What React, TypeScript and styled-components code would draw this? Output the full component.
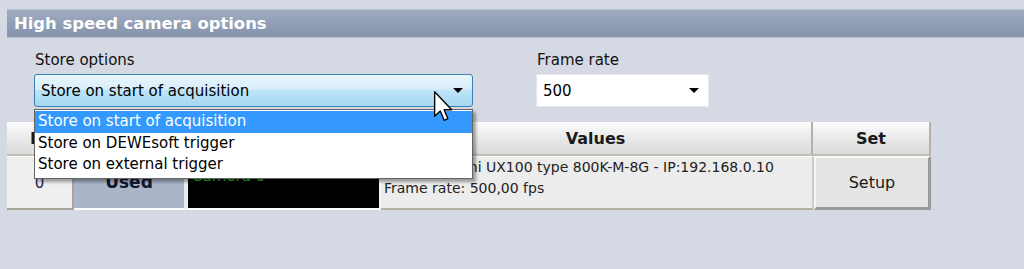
import React from 'react';
import styled, { createGlobalStyle } from 'styled-components';

const GlobalStyle = createGlobalStyle`
  html, body {
    margin: 0;
    padding: 0;
    background: #d5d9e3;
    font-family: "DejaVu Sans", "Liberation Sans", sans-serif;
    color: #000;
  }
`;

const Page = styled.div`
  position: relative;
  width: 1024px;
  height: 269px;
  overflow: hidden;
  padding-top: 9px;
  box-sizing: border-box;
`;

const TitleBar = styled.div`
  margin-left: 7px;
  height: 29px;
  box-sizing: border-box;
  border-top: 1px solid #b4bfcf;
  border-bottom: 1px solid #b7c0ce;
  background: linear-gradient(#9eabc1, #8593ab);
  color: #fff;
  font-weight: bold;
  font-size: 16.4px;
  line-height: 28px;
  padding-left: 7px;
`;

const Options = styled.div`
  display: flex;
  gap: 63px;
  padding: 13px 0 0 34px;
`;

const Field = styled.div<{ $width: number }>`
  position: relative;
  display: flex;
  flex-direction: column;
  gap: 5px;
  width: ${({ $width }) => $width}px;
`;

const Label = styled.div`
  font-size: 15px;
  line-height: 18px;
  padding-left: 1px;
  color: #111;
`;

const Combo = styled.div<{ $active?: boolean }>`
  height: 33px;
  box-sizing: border-box;
  display: flex;
  align-items: center;
  justify-content: space-between;
  padding: 0 9px 0 6px;
  font-size: 15px;
  border-radius: ${({ $active }) => ($active ? '3px' : '1px')};
  border: 1px solid ${({ $active }) => ($active ? '#3c7fb1' : '#e6e8ee')};
  background: ${({ $active }) =>
    $active ? 'linear-gradient(#e9f5fc 0%, #d8eefb 45%, #bde4f8 50%, #a5d7f2 100%)' : '#fff'};
`;

const Arrow = styled.span`
  width: 0;
  height: 0;
  border-left: 5px solid transparent;
  border-right: 5px solid transparent;
  border-top: 5px solid #000;
`;

const DropList = styled.div`
  position: absolute;
  top: 58px;
  left: 0;
  width: 439px;
  box-sizing: border-box;
  background: #fff;
  border: 1px solid #646464;
  box-shadow: 3px 3px 3px rgba(0, 0, 0, 0.35);
  padding: 1px 0 2px;
  z-index: 5;
`;

const DropItem = styled.div<{ $selected?: boolean }>`
  height: 21.5px;
  line-height: 21px;
  padding-left: 3px;
  font-size: 15px;
  background: ${({ $selected }) => ($selected ? '#3399ff' : 'transparent')};
  color: ${({ $selected }) => ($selected ? '#fff' : '#000')};
`;

const Grid = styled.div`
  margin: 15px 0 0 7px;
  width: 924px;
`;

const Row = styled.div<{ $height: number }>`
  display: flex;
  height: ${({ $height }) => $height}px;
`;

const HeadCell = styled.div<{ $width: number }>`
  width: ${({ $width }) => $width}px;
  box-sizing: border-box;
  border-right: 2px solid #b6b1a6;
  border-bottom: 2px solid #c2beb5;
  background: linear-gradient(#fcfcfc, #e6e6e6 60%, #dadada);
  display: flex;
  align-items: center;
  justify-content: center;
  font-weight: bold;
  font-size: 16px;
  color: #1a1a1a;
`;

const RaisedCell = styled.div<{ $width: number }>`
  width: ${({ $width }) => $width}px;
  box-sizing: border-box;
  background: #efefef;
  border-right: 2px solid #a8a49a;
  border-bottom: 2px solid #a8a49a;
  border-top: 1px solid #fff;
  display: flex;
  align-items: center;
  justify-content: center;
  font-size: 15px;
  color: #1e2a55;
`;

const StateCell = styled.div<{ $width: number }>`
  width: ${({ $width }) => $width}px;
  box-sizing: border-box;
  background: #aab5c9;
  border-bottom: 2px solid #fff;
  border-right: 4px solid #e9ebee;
  display: flex;
  align-items: center;
  justify-content: center;
  font-weight: bold;
  font-size: 17px;
  color: #101830;
`;

const NameCell = styled.div<{ $width: number }>`
  width: ${({ $width }) => $width}px;
  box-sizing: border-box;
  background: #000;
  border-bottom: 2px solid #fff;
  border-right: 2px solid #f4f4f4;
  color: #1ec21e;
  font-size: 15px;
  line-height: 18px;
  padding: 11px 0 0 4px;
`;

const ValueCell = styled.div<{ $width: number }>`
  width: ${({ $width }) => $width}px;
  box-sizing: border-box;
  background: #ececec;
  border-top: 1px solid #fff;
  border-bottom: 2px solid #b6b1a6;
  border-right: 2px solid #cfcbc2;
  font-size: 14px;
  line-height: 21px;
  padding: 0 0 0 3px;
  color: #222;
`;

const SetupButton = styled.div<{ $width: number }>`
  width: ${({ $width }) => $width}px;
  box-sizing: border-box;
  background: #e4e4e4;
  border-top: 2px solid #f6f6f6;
  border-left: 2px solid #f6f6f6;
  border-right: 3px solid #9a9a9a;
  border-bottom: 3px solid #9a9a9a;
  display: flex;
  align-items: center;
  justify-content: center;
  font-size: 16px;
  color: #1a1a1a;
`;

const Pointer = styled.svg`
  position: absolute;
  left: 431px;
  top: 90px;
  z-index: 10;
`;

const storeOptions = [
  'Store on start of acquisition',
  'Store on DEWEsoft trigger',
  'Store on external trigger',
];

export default function App() {
  return (
    <Page>
      <GlobalStyle />
      <TitleBar>High speed camera options</TitleBar>

      <Options>
        <Field $width={439}>
          <Label>Store options</Label>
          <Combo $active>
            <span>{storeOptions[0]}</span>
            <Arrow />
          </Combo>
          <DropList>
            {storeOptions.map((opt, i) => (
              <DropItem key={opt} $selected={i === 0}>{opt}</DropItem>
            ))}
          </DropList>
        </Field>
        <Field $width={173}>
          <Label>Frame rate</Label>
          <Combo>
            <span>500</span>
            <Arrow />
          </Combo>
        </Field>
      </Options>

      <Grid>
        <Row $height={34}>
          <HeadCell $width={67}>ID</HeadCell>
          <HeadCell $width={111} />
          <HeadCell $width={195} />
          <HeadCell $width={433}>Values</HeadCell>
          <HeadCell $width={118}>Set</HeadCell>
        </Row>
        <Row $height={54}>
          <RaisedCell $width={67}>0</RaisedCell>
          <StateCell $width={114}>Used</StateCell>
          <NameCell $width={193}>Camera 0</NameCell>
          <ValueCell $width={433}>
            <div>FASTCAM Mini UX100 type 800K-M-8G - IP:192.168.0.10</div>
            <div>Frame rate: 500,00 fps</div>
          </ValueCell>
          <SetupButton $width={117}>Setup</SetupButton>
        </Row>
      </Grid>

      <Pointer width="26" height="34" viewBox="0 0 13 20">
        <path
          d="M1 1 L1 15.5 L4.3 12.4 L6.6 17.8 L8.8 16.9 L6.6 11.6 L11 11.6 Z"
          fill="#fff"
          stroke="#000"
          strokeWidth="0.8"
          strokeLinejoin="round"
        />
      </Pointer>
    </Page>
  );
}
